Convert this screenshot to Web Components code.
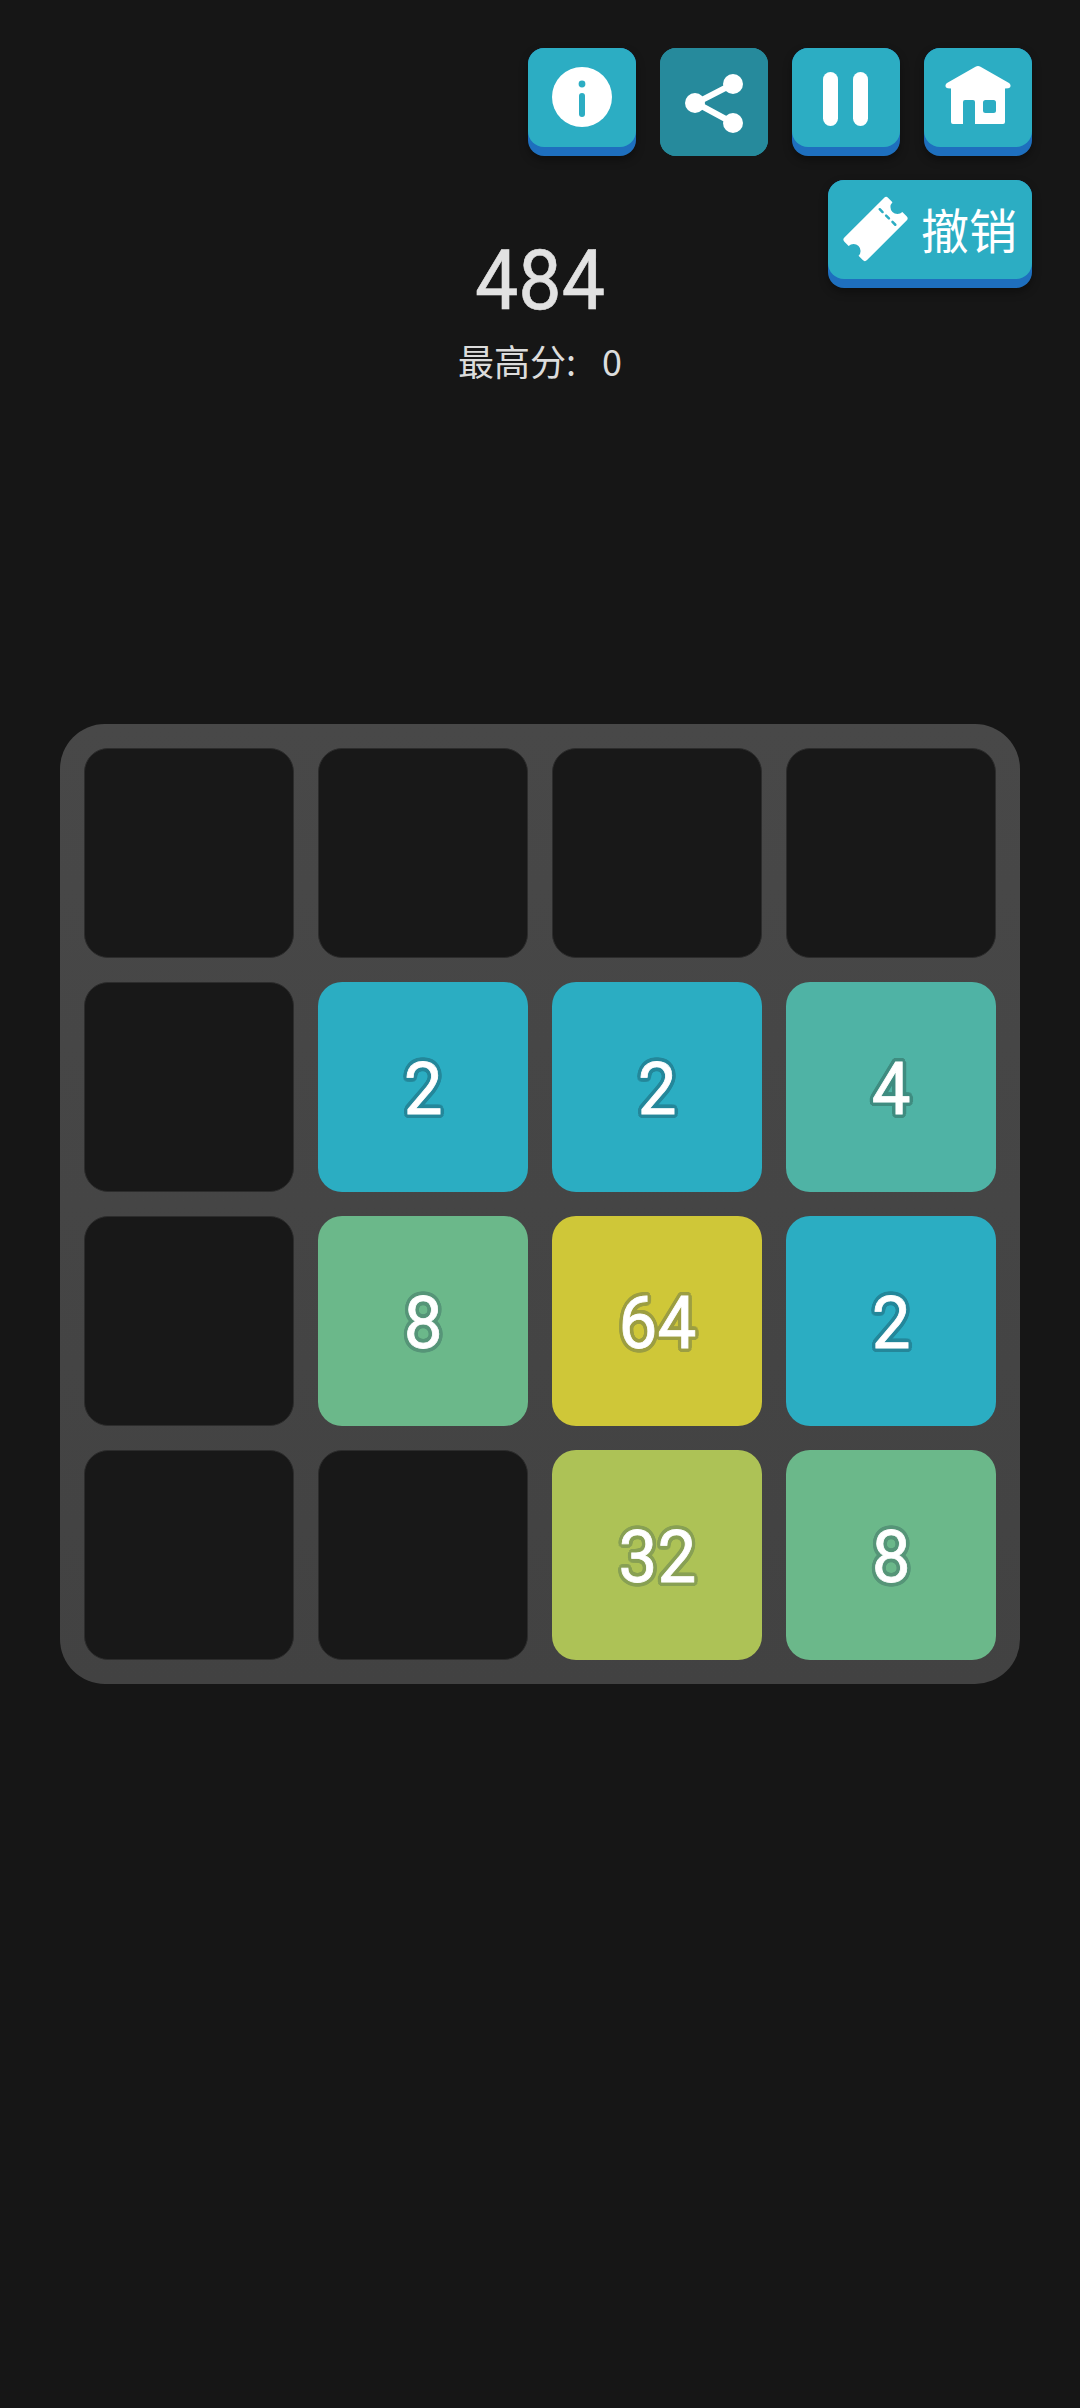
<!DOCTYPE html>
<html lang="zh">
<head>
<meta charset="utf-8">
<title>2048</title>
<style>
    html, body { margin: 0; background: #161616; }
</style>
</head>
<body>
<game-page>
    <game-header score="484" best="0"></game-header>
    <game-board cells="0,0,0,0, 0,2,2,4, 0,8,64,2, 0,0,32,8"></game-board>
</game-page>
<script>
const ICONS = {
    info: `<svg viewBox="0 0 108 108" width="108" height="108"><circle cx="54" cy="49" r="30" fill="#fff"/><circle cx="54" cy="36" r="3.4" fill="#2cadc3"/><rect x="51" y="45" width="6" height="24" rx="3" fill="#2cadc3"/></svg>`,
    share: `<svg viewBox="0 0 108 108" width="108" height="108"><path d="M73 36 L36 55 L73 75" fill="none" stroke="#fff" stroke-width="6"/><circle cx="73" cy="36" r="10" fill="#fff"/><circle cx="35" cy="55" r="10" fill="#fff"/><circle cx="73" cy="75" r="10" fill="#fff"/></svg>`,
    pause: `<svg viewBox="0 0 108 108" width="108" height="108"><rect x="31" y="24" width="15" height="54" rx="7.5" fill="#fff"/><rect x="61" y="24" width="15" height="54" rx="7.5" fill="#fff"/></svg>`,
    home: `<svg viewBox="0 0 108 108" width="108" height="108"><path d="M51.500 18.800 Q54 17.400 56.500 18.800 L85 35 Q87.500 37 86 39.500 Q85 40.500 81 40.500 L81 74 Q81 76 79 76 L51 76 L51 54 Q51 52 49 52 L41 52 Q39 52 39 54 L39 76 L29 76 Q27 76 27 74 L27 40.500 Q23 40.500 22 39.500 Q20.500 37 23 35 Z" fill="#fff"/><rect x="59" y="52" width="13" height="13" rx="2.500" fill="#2cadc3"/></svg>`,
    ticket: `<svg viewBox="0 0 93 99" width="93" height="99"><g transform="translate(47.500 49) rotate(45)"><path d="M-13 -31 H-7 A7 7 0 0 0 7 -31 H13 Q16 -31 16 -28 V28 Q16 31 13 31 H7 A7 7 0 0 0 -7 31 H-13 Q-16 31 -16 28 V-28 Q-16 -31 -13 -31 Z" fill="#fff"/><path d="M-11 -17 H-7 M-2 -17 H2 M7 -17 H11" stroke="#2cadc3" stroke-width="2.500" stroke-linecap="round"/></g></svg>`
}

class GameButton extends HTMLElement {
    constructor() {
        super()
        const root = this.attachShadow({mode: 'open'})
        const icon = this.getAttribute('icon')
        const off = this.hasAttribute('disabled')
        root.innerHTML = `
        <style>
            :host {
                display: block;
                height: 108px;
                border-radius: 16px;
                background: ${off ? '#268a9c' : '#1e6fbe'};
                ${off ? '' : 'box-shadow: 0 4px 8px rgba(0,0,0,.35);'}
            }
            .face {
                height: ${off ? 108 : 99}px;
                border-radius: 16px;
                background: ${off ? '#268a9c' : '#2cadc3'};
                display: flex;
                align-items: flex-start;
                color: #fff;
            }
            svg { display: block; flex: none; }
            slot {
                display: block;
                font: 48px/96px "Noto Sans CJK SC", "Liberation Sans", sans-serif;
                white-space: nowrap;
            }
        </style>
        <div class="face">${ICONS[icon]}<slot></slot></div>`
    }
}

class GameHeader extends HTMLElement {
    constructor() {
        super()
        const root = this.attachShadow({mode: 'open'})
        root.innerHTML = `
        <style>
            :host {
                display: grid;
                grid-template-columns: 1fr;
                row-gap: 24px;
                padding: 48px 48px 0 48px;
                height: 724px;
                box-sizing: border-box;
                align-content: start;
            }
            .row1 {
                display: flex;
                justify-content: flex-end;
                gap: 24px;
            }
            .row1 game-button { width: 108px; }
            .undo { grid-area: 2 / 1; justify-self: end; width: 204px; }
            .score {
                grid-area: 2 / 1;
                justify-self: center;
                text-align: center;
                color: #e2e2e2;
            }
            .points {
                font: 400 83px/96px Roboto, "Noto Sans CJK SC", sans-serif;
                margin-top: 53px;
                transform: scaleX(.93);
                -webkit-text-stroke: .6px #e2e2e2;
            }
            .best {
                font: 36px/50px "Noto Sans CJK SC", sans-serif;
                margin-top: 6px;
                white-space: pre;
                word-spacing: 5px;
                color: #dcdcdc;
            }
        </style>
        <div class="row1">
            <game-button icon="info"></game-button>
            <game-button icon="share" disabled></game-button>
            <game-button icon="pause"></game-button>
            <game-button icon="home"></game-button>
        </div>
        <game-button class="undo" icon="ticket">撤销</game-button>
        <div class="score">
            <div class="points">${this.getAttribute('score')}</div>
            <div class="best">最高分:  ${this.getAttribute('best')}</div>
        </div>`
    }
}

// couleur de fond et contour du chiffre pour chaque valeur
const TILES = {
    2: ['#2badc2', '#24879a'],
    4: ['#4fb3a5', '#3f8c80'],
    8: ['#6bb88a', '#569578'],
    32: ['#adc256', '#88a054'],
    64: ['#cfc738', '#9c9e42']
}

class GameTile extends HTMLElement {
    constructor() {
        super()
        const root = this.attachShadow({mode: 'open'})
        const value = this.getAttribute('value')
        const tile = TILES[value]
        const o = tile ? tile[1] : ''
        // contour arrondi : 16 ombres réparties sur un cercle
        let shadow = []
        for (let i = 0; i < 16; i++) {
            const a = i * Math.PI / 8
            shadow.push(`${(4 * Math.cos(a)).toFixed(1)}px ${(4 * Math.sin(a)).toFixed(1)}px 0 ${o}`)
        }
        root.innerHTML = `
        <style>
            :host {
                display: flex;
                align-items: center;
                justify-content: center;
                height: 210px;
                box-sizing: border-box;
                border-radius: 24px;
                background: ${tile ? tile[0] : '#181818'};
                ${tile ? '' : 'border: 1px solid #2c2c2c;'}
            }
            span {
                font: 400 72px/1 Roboto, sans-serif;
                color: #fff;
                padding: 5px 0 0 0;
                transform: scaleX(.96);
                -webkit-text-stroke: .8px #fff;
                text-shadow: ${shadow.join(',')};
            }
        </style>
        ${tile ? `<span>${value}</span>` : ''}`
    }
}

class GameBoard extends HTMLElement {
    constructor() {
        super()
        const root = this.attachShadow({mode: 'open'})
        const cells = this.getAttribute('cells').split(',').map(v => parseInt(v))
        root.innerHTML = `
        <style>
            :host {
                display: grid;
                grid-template-columns: repeat(4, 210px);
                gap: 24px;
                padding: 24px;
                width: 960px;
                box-sizing: border-box;
                margin: 0 auto;
                border-radius: 45px;
                background: linear-gradient(#484848, #424242);
            }
        </style>
        ${cells.map(v => `<game-tile value="${v}"></game-tile>`).join('')}`
    }
}

class GamePage extends HTMLElement {
    constructor() {
        super()
        const root = this.attachShadow({mode: 'open'})
        root.innerHTML = `
        <style>
            :host {
                display: block;
                height: 2408px;
                background: #161616;
                overflow: hidden;
            }
        </style>
        <slot></slot>`
    }
}

customElements.define('game-button', GameButton)
customElements.define('game-tile', GameTile)
customElements.define('game-board', GameBoard)
customElements.define('game-header', GameHeader)
customElements.define('game-page', GamePage)
</script>
</body>
</html>
